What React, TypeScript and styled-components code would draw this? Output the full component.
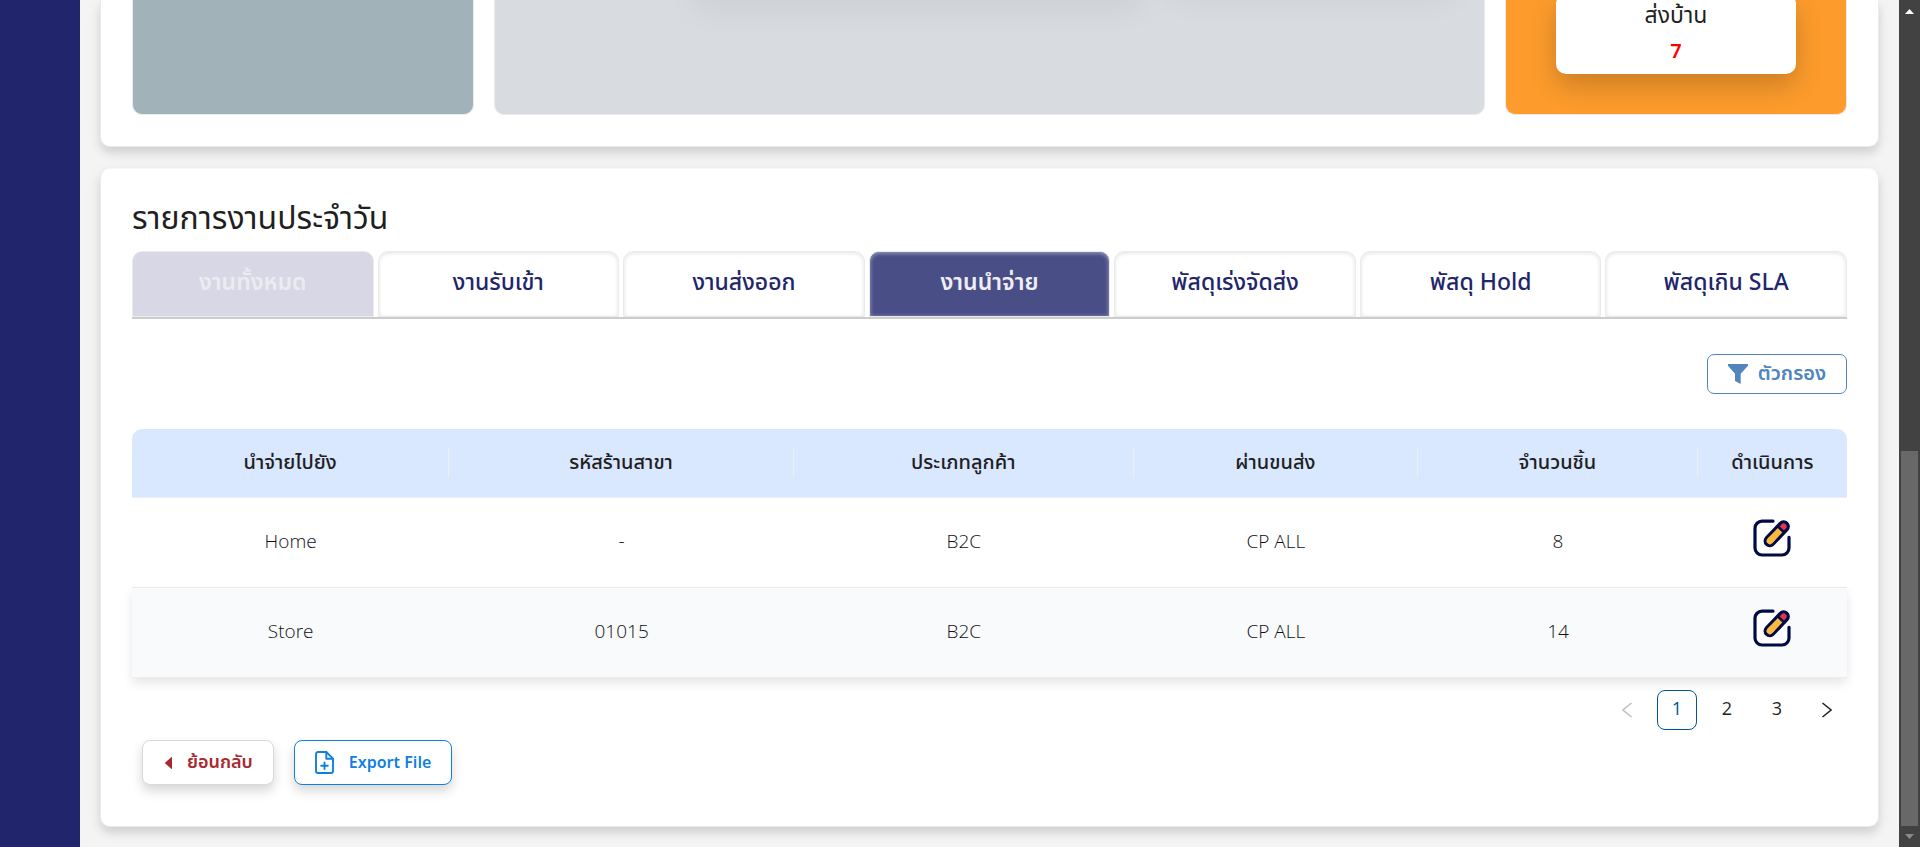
import React, { useState } from "react";
import styled, { createGlobalStyle, css } from "styled-components";

const GlobalStyle = createGlobalStyle`
  *, *::before, *::after { box-sizing: border-box; }
  body {
    margin: 0;
    background: #f4f4f4;
    color: #1f1f1f;
    font-family: "Noto Sans Thai", "Open Sans", "Noto Sans", sans-serif;
    overflow: hidden;
  }
  button { font-family: inherit; cursor: pointer; }
`;

const Page = styled.div`
  display: grid;
  grid-template-columns: 80px minmax(0, 1fr) 21px;
  min-height: 100vh;
`;

const Sidebar = styled.aside`
  background: #21266c;
`;

const Main = styled.main`
  display: flex;
  flex-direction: column;
  gap: 21px;
  padding: 0 20px 20px;
`;

const Card = styled.section<{ $continued?: boolean }>`
  background: #fff;
  border: 1px solid #ebebeb;
  border-top-color: #f8f8f8;
  border-radius: 10px;
  padding: 30px 31px;
  box-shadow: 0 6px 10px rgba(0, 0, 0, 0.13), 0 2px 24px rgba(0, 0, 0, 0.03);
  ${(p) =>
    p.$continued &&
    css`
      border-top: 0;
      border-radius: 0 0 10px 10px;
      padding: 0 31px 31px;
    `}
`;

const Summary = styled.div`
  display: grid;
  grid-template-columns: 342fr 991fr 342fr;
  gap: 20px;
`;

const SummaryBlock = styled.div<{ $color: string; $alignEnd?: boolean }>`
  display: flex;
  justify-content: ${(p) => (p.$alignEnd ? "flex-end" : "center")};
  align-items: flex-start;
  gap: 26px;
  height: 115px;
  padding: 0 30px;
  overflow: hidden;
  background: ${(p) => p.$color};
  border: 1px solid #ebebeb;
  border-top: 0;
  border-radius: 0 0 10px 10px;
`;

const Counter = styled.div`
  width: 240px;
  height: 80px;
  margin-top: -6px;
  padding-top: 4px;
  background: #fff;
  border-radius: 10px;
  box-shadow: 0 12px 28px rgba(0, 0, 0, 0.2);
  text-align: center;
`;

const CounterLabel = styled.div`
  font-size: 23px;
  line-height: 36px;
`;

const CounterValue = styled.div`
  color: #f00;
  font-size: 20px;
  font-weight: 600;
  line-height: 36px;
`;

const HiddenTile = styled.div<{ $width: number; $depth: number }>`
  flex: 0 0 ${(p) => p.$width}%;
  height: 60px;
  margin-top: -${(p) => p.$depth}px;
  border-radius: 10px;
  background: #fff;
  box-shadow: 0 10px 32px rgba(0, 0, 0, 0.06);
`;

const Title = styled.h2`
  margin: 0;
  font-size: 32px;
  font-weight: 400;
  line-height: 40px;
`;

const Tabs = styled.div`
  display: grid;
  grid-template-columns: repeat(7, minmax(0, 1fr));
  gap: 4px;
  margin-top: 12px;
  border-bottom: 2px solid #ccc;
`;

type TabState = "disabled" | "active" | "idle";

const Tab = styled.button<{ $state: TabState }>`
  height: 66px;
  padding: 0 8px 2px;
  border: 1px solid #ebebeb;
  border-radius: 10px 10px 0 0;
  background: #fff;
  color: #21266c;
  box-shadow: inset 0 1px 4px rgba(0, 0, 0, 0.12);
  font-size: 23px;
  font-weight: 500;
  line-height: 32px;
  ${(p) =>
    p.$state === "disabled" &&
    css`
      background: #d8d7e5;
      color: #ebebf1;
      font-weight: 600;
      box-shadow: none;
      cursor: not-allowed;
    `}
  ${(p) =>
    p.$state === "active" &&
    css`
      background: #4a4e87;
      color: #eeeef4;
      font-weight: 600;
      box-shadow: inset 0 1px 4px rgba(255, 255, 255, 0.5);
    `}
`;

const Toolbar = styled.div`
  display: flex;
  justify-content: flex-end;
  margin: 35px 0;
`;

const FilterButton = styled.button`
  display: flex;
  align-items: center;
  justify-content: center;
  gap: 10px;
  width: 140px;
  height: 40px;
  padding: 0;
  background: #fff;
  color: #5086bc;
  border: 1px solid #5086bc;
  border-radius: 7px;
  font-size: 20px;
  font-weight: 600;
`;

const JobTable = styled.table`
  width: 100%;
  table-layout: fixed;
  border-collapse: separate;
  border-spacing: 0;
`;

const Column = styled.col<{ $share: number }>`
  width: ${(p) => p.$share}%;
`;

const HeadCell = styled.th`
  height: 69px;
  padding: 0;
  background: #d9e7ff;
  border-bottom: 1px solid #ebeff5;
  font-size: 20px;
  font-weight: 500;
  &:first-child { border-top-left-radius: 10px; }
  &:last-child { border-top-right-radius: 10px; }
`;

const HeadLabel = styled.div`
  line-height: 30px;
  border-right: 1px solid #eceef2;
  ${HeadCell}:last-child & { border-right: 0; }
`;

const Row = styled.tr<{ $raised: boolean }>`
  background: ${(p) => (p.$raised ? "#f9fafc" : "#fff")};
  box-shadow: ${(p) => (p.$raised ? "0 5px 10px rgba(0, 0, 0, 0.1)" : "none")};
`;

const Cell = styled.td`
  height: 90px;
  padding: 0 0 4px;
  border-bottom: 1px solid #ededed;
  color: #111;
  font-family: "Open Sans", "Noto Sans Thai", sans-serif;
  font-size: 19px;
  font-weight: 300;
  text-align: center;
`;

const IconButton = styled.button`
  display: inline-flex;
  padding: 0 0 6px;
  border: 0;
  background: none;
  vertical-align: middle;
`;

const Pager = styled.nav`
  display: flex;
  justify-content: flex-end;
  gap: 10px;
  margin-top: 12px;
`;

const PageButton = styled.button<{ $current?: boolean }>`
  display: flex;
  align-items: center;
  justify-content: center;
  width: 40px;
  height: 40px;
  padding: 0;
  border: 1px solid ${(p) => (p.$current ? "#005691" : "transparent")};
  border-radius: 8px;
  background: none;
  color: ${(p) => (p.$current ? "#005691" : "#1f1f1f")};
  font-family: "Open Sans", sans-serif;
  font-size: 18px;
  font-weight: ${(p) => (p.$current ? 500 : 400)};
  line-height: 34px;
  &:disabled { color: #bfbfbf; cursor: not-allowed; }
`;

const PageNumber = styled.span`
  padding-bottom: 5px;
`;

const Actions = styled.div`
  display: flex;
  gap: 20px;
  padding: 10px 10px 11px;
`;

const ActionButton = styled.button<{ $tone: string; $edge: string; $size: number }>`
  display: flex;
  align-items: center;
  justify-content: center;
  gap: 15px;
  height: 45px;
  padding: 0 20px;
  background: #fff;
  color: ${(p) => p.$tone};
  border: 1px solid ${(p) => p.$edge};
  border-radius: 8px;
  box-shadow: 0 6px 12px rgba(0, 0, 0, 0.16);
  font-size: ${(p) => p.$size}px;
  font-weight: 600;
`;

const ScrollTrack = styled.div`
  display: flex;
  flex-direction: column;
  align-items: center;
  justify-content: space-between;
  padding: 9px 2px 8px;
  background: #424242;
`;

const ScrollThumb = styled.div`
  flex: 0 0 375px;
  width: 100%;
  margin: auto 0 8px;
  background: #686868;
`;

const FunnelIcon = () => (
  <svg width="20" height="20" viewBox="0 0 20 20" fill="currentColor" aria-hidden="true">
    <path d="M0 0h20v1.8l-7.3 8V20L7 17V9.8L0 1.8z" />
  </svg>
);

const EditIcon = () => (
  <svg width="38" height="38" viewBox="0 0 38 38" fill="none" strokeLinecap="round" aria-hidden="true">
    <path d="M20 2.2H9a7 7 0 0 0-7 7V29a7 7 0 0 0 7 7h20a7 7 0 0 0 7-7V18.3" fill="#fff" stroke="#000b45" strokeWidth="3.2" />
    <path d="M16.8 22 30.6 7.5" stroke="#000b45" strokeWidth="12.5" />
    <path d="M29 9.2 30.6 7.5" stroke="#e6354a" strokeWidth="6" />
    <path d="M16.8 22 19 19.7" stroke="#fbb940" strokeWidth="6.4" />
    <path d="M16.8 22 27.4 10.9" stroke="#fbb940" strokeWidth="6.4" strokeLinecap="butt" />
    <path d="M25.6 8.1 31 13.2" stroke="#000b45" strokeWidth="2.6" />
  </svg>
);

const BackIcon = () => (
  <svg width="9" height="12" viewBox="0 0 9 12" fill="currentColor" aria-hidden="true">
    <path d="M9 .6v10.8q0 .9-.8.3L2.3 6.6q-.5-.6 0-1.2L8.2.3Q9-.3 9 .6z" />
  </svg>
);

const FilePlusIcon = () => (
  <svg width="19" height="23" viewBox="0 0 19 23" fill="none" stroke="currentColor" strokeWidth="1.9" strokeLinecap="round" strokeLinejoin="round" aria-hidden="true">
    <path d="M11.3 1H3a2 2 0 0 0-2 2v17a2 2 0 0 0 2 2h13a2 2 0 0 0 2-2V7.7z" />
    <path d="M11.3 1v6.7H18M9.5 11.5v6.6M6.2 14.8h6.6" />
  </svg>
);

const Chevron = ({ back }: { back?: boolean }) => (
  <svg width="10" height="16" viewBox="0 0 10 16" fill="none" stroke="currentColor" strokeWidth="1.5" aria-hidden="true">
    <path d={back ? "M9.5 1 .9 8l8.6 7" : "M.5 1l8.6 7L.5 15"} />
  </svg>
);

const ArrowUp = () => (
  <svg width="9" height="5" viewBox="0 0 9 5" aria-hidden="true">
    <path d="M4.5 0 9 5H0z" fill="#fff" />
  </svg>
);

const ArrowDown = () => (
  <svg width="9" height="5" viewBox="0 0 9 5" aria-hidden="true">
    <path d="M0 0h9L4.5 5z" fill="#8a8a8a" />
  </svg>
);

const tabs = ["งานทั้งหมด", "งานรับเข้า", "งานส่งออก", "งานนำจ่าย", "พัสดุเร่งจัดส่ง", "พัสดุ Hold", "พัสดุเกิน SLA"];

const columns = [
  { label: "นำจ่ายไปยัง", share: 18.5 },
  { label: "รหัสร้านสาขา", share: 20.1 },
  { label: "ประเภทลูกค้า", share: 19.8 },
  { label: "ผ่านขนส่ง", share: 16.6 },
  { label: "จำนวนชิ้น", share: 16.3 },
  { label: "ดำเนินการ", share: 8.7 },
];

const rows = [
  ["Home", "-", "B2C", "CP ALL", "8"],
  ["Store", "01015", "B2C", "CP ALL", "14"],
];

export default function App() {
  const [activeTab, setActiveTab] = useState(3);
  const [page, setPage] = useState(1);

  const tabState = (index: number): TabState =>
    index === 0 ? "disabled" : index === activeTab ? "active" : "idle";

  return (
    <>
      <GlobalStyle />
      <Page>
        <Sidebar />
        <Main>
          <Card $continued>
            <Summary>
              <SummaryBlock $color="#a1b2b8" />
              <SummaryBlock $color="#d8dbe0" $alignEnd>
                <HiddenTile $width={48} $depth={60} />
                <HiddenTile $width={31} $depth={72} />
              </SummaryBlock>
              <SummaryBlock $color="#fd9c2c">
                <Counter>
                  <CounterLabel>ส่งบ้าน</CounterLabel>
                  <CounterValue>7</CounterValue>
                </Counter>
              </SummaryBlock>
            </Summary>
          </Card>

          <Card>
            <Title>รายการงานประจำวัน</Title>
            <Tabs role="tablist">
              {tabs.map((label, index) => (
                <Tab
                  key={label}
                  type="button"
                  role="tab"
                  aria-selected={index === activeTab}
                  disabled={index === 0}
                  $state={tabState(index)}
                  onClick={() => setActiveTab(index)}
                >
                  {label}
                </Tab>
              ))}
            </Tabs>

            <Toolbar>
              <FilterButton type="button">
                <FunnelIcon />
                ตัวกรอง
              </FilterButton>
            </Toolbar>

            <JobTable>
              <colgroup>
                {columns.map((column) => (
                  <Column key={column.label} $share={column.share} />
                ))}
              </colgroup>
              <thead>
                <tr>
                  {columns.map((column) => (
                    <HeadCell key={column.label} scope="col">
                      <HeadLabel>{column.label}</HeadLabel>
                    </HeadCell>
                  ))}
                </tr>
              </thead>
              <tbody>
                {rows.map((row, index) => (
                  <Row key={row[0]} $raised={index === 1}>
                    {row.map((value, cell) => (
                      <Cell key={cell}>{value}</Cell>
                    ))}
                    <Cell>
                      <IconButton type="button" aria-label="ดำเนินการ">
                        <EditIcon />
                      </IconButton>
                    </Cell>
                  </Row>
                ))}
              </tbody>
            </JobTable>

            <Pager>
              <PageButton type="button" aria-label="ก่อนหน้า" disabled={page === 1} onClick={() => setPage(page - 1)}>
                <Chevron back />
              </PageButton>
              {[1, 2, 3].map((n) => (
                <PageButton key={n} type="button" $current={n === page} onClick={() => setPage(n)}>
                  <PageNumber>{n}</PageNumber>
                </PageButton>
              ))}
              <PageButton type="button" aria-label="ถัดไป" disabled={page === 3} onClick={() => setPage(page + 1)}>
                <Chevron />
              </PageButton>
            </Pager>

            <Actions>
              <ActionButton type="button" $tone="#a8282e" $edge="#d9d9d9" $size={18}>
                <BackIcon />
                ย้อนกลับ
              </ActionButton>
              <ActionButton type="button" $tone="#0f80e0" $edge="#0f80e0" $size={16}>
                <FilePlusIcon />
                Export File
              </ActionButton>
            </Actions>
          </Card>
        </Main>
        <ScrollTrack aria-hidden="true">
          <ArrowUp />
          <ScrollThumb />
          <ArrowDown />
        </ScrollTrack>
      </Page>
    </>
  );
}
